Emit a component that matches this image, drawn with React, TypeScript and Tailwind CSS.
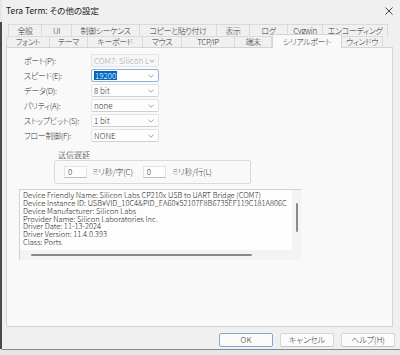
import React from 'react';

const ui = "font-['Noto_Sans_CJK_JP',sans-serif] [font-feature-settings:'palt'] font-light";

const row1 = [
  { label: '全般', w: 34 },
  { label: 'UI', w: 30 },
  { label: '制御シーケンス', w: 68 },
  { label: 'コピーと貼り付け', w: 77 },
  { label: '表示', w: 33 },
  { label: 'ログ', w: 38 },
  { label: 'Cygwin', w: 35 },
  { label: 'エンコーディング', w: 65 },
];

const row2 = [
  { label: 'フォント', w: 44 },
  { label: 'テーマ', w: 38 },
  { label: 'キーボード', w: 55 },
  { label: 'マウス', w: 39 },
  { label: 'TCP/IP', w: 53 },
  { label: '端末', w: 37 },
  { label: 'シリアルポート', w: 70, active: true },
  { label: 'ウィンドウ', w: 41 },
];

const fields = [
  { label: 'ポート(P):', value: 'COM7: Silicon L', disabled: true },
  { label: 'スピード(E):', value: '19200', focused: true },
  { label: 'データ(D):', value: '8 bit' },
  { label: 'パリティ(A):', value: 'none' },
  { label: 'ストップビット(S):', value: '1 bit' },
  { label: 'フロー制御(F):', value: 'NONE' },
];

const info = [
  'Device Friendly Name: Silicon Labs CP210x USB to UART Bridge (COM7)',
  'Device Instance ID: USB¥VID_10C4&PID_EA60¥52107F8B6735EF119C181A806C',
  'Device Manufacturer: Silicon Labs',
  'Provider Name: Silicon Laboratories Inc.',
  'Driver Date: 11-13-2024',
  'Driver Version: 11.4.0.393',
  'Class: Ports',
];

function Chevron() {
  return (
    <svg width="6" height="4" viewBox="0 0 6 4" className="shrink-0">
      <polyline points="0.5,0.8 3,3.2 5.5,0.8" fill="none" stroke="#8a8a8a" strokeWidth="0.8" />
    </svg>
  );
}

function Combo({ value, disabled, focused }: { value: string; disabled?: boolean; focused?: boolean }) {
  return (
    <div
      className={
        focused
          ? 'w-[68px] h-[13px] flex items-center justify-between pl-[2px] pr-[4px] bg-[#fdfdfd] border border-[#8fb3d9] rounded-[2px]'
          : disabled
          ? 'w-[68px] h-[13px] flex items-center justify-between pl-[2px] pr-[4px] bg-[#f7f7f7] border border-[#e3e3e3] rounded-[2px]'
          : 'w-[68px] h-[13px] flex items-center justify-between pl-[2px] pr-[4px] bg-[#fdfdfd] border border-[#e2e2e2] border-b-[#cfcfcf] rounded-[2px]'
      }
    >
      {focused ? (
        <span className="bg-[#0067c0] text-white px-[1px] leading-[9px] text-[8px]">{value}</span>
      ) : (
        <span className={disabled ? 'text-[#a8a8a8] text-[8px] leading-[10px] whitespace-nowrap' : 'text-[#333] text-[8px] leading-[10px]'}>
          {value}
        </span>
      )}
      <Chevron />
    </div>
  );
}

function Button({ label, primary }: { label: string; primary?: boolean }) {
  return (
    <div
      className={
        primary
          ? 'w-[54px] h-[14px] flex items-center justify-center bg-[#fbfbfb] border border-[#7fa9d4] rounded-[2px] text-[8px] text-[#333]'
          : 'w-[54px] h-[14px] flex items-center justify-center bg-[#fbfbfb] border border-[#d6d6d6] border-b-[#c4c4c4] rounded-[2px] text-[8px] text-[#333]'
      }
    >
      {label}
    </div>
  );
}

export default function App() {
  return (
    <div className={`w-[400px] h-[355px] overflow-hidden bg-[#e6e6e6] flex ${ui}`}>
      <div className="w-[2px] h-[327px] mt-[22px] bg-[#4a4a4a] shrink-0" />
      <div className="w-[410px] h-[350px] shrink-0 bg-[#f0f0f0] border-b border-[#8a8a8a] flex flex-col">
        {/* title bar */}
        <div className="h-[24px] flex items-start justify-between">
          <span className="ml-[4px] mt-[4px] text-[8.5px] leading-[12px] text-[#1a1a1a] font-normal">Tera Term: その他の設定</span>
          <svg width="8" height="8" viewBox="0 0 8 8" className="mr-[19px] mt-[7px]">
            <path d="M0.5 0.5 L7.5 7.5 M7.5 0.5 L0.5 7.5" stroke="#333" strokeWidth="0.9" />
          </svg>
        </div>

        {/* tabs */}
        <div className="flex ml-[6px] h-[12px]">
          {row1.map((t) => (
            <div
              key={t.label}
              style={{ width: t.w }}
              className="h-[12px] border-t border-r border-[#dadada] first:border-l flex items-center justify-center text-[8px] leading-[10px] tracking-[-0.4px] text-[#333] whitespace-nowrap"
            >
              {t.label}
            </div>
          ))}
        </div>
        <div className="flex ml-[4px] h-[11px] items-end relative z-10">
          {row2.map((t) =>
            t.active ? (
              <div
                key={t.label}
                style={{ width: t.w }}
                className="h-[14px] -mb-px bg-[#f9f9f9] border-t border-l border-r border-[#d4d4d4] flex items-center justify-center text-[8px] leading-[10px] tracking-[-0.4px] text-[#333] whitespace-nowrap"
              >
                {t.label}
              </div>
            ) : (
              <div
                key={t.label}
                style={{ width: t.w }}
                className="h-[11px] border-t border-r border-[#dadada] first:border-l flex items-center justify-center text-[8px] leading-[10px] tracking-[-0.4px] text-[#333] whitespace-nowrap"
              >
                {t.label}
              </div>
            )
          )}
        </div>

        {/* panel */}
        <div className="ml-[4px] w-[387px] h-[280px] bg-[#f9f9f9] border border-[#d4d4d4] pt-[6px] pl-[17px]">
          <div className="flex flex-col gap-[2px]">
            {fields.map((f) => (
              <div key={f.label} className="flex items-center h-[13px]">
                <span className="w-[67px] text-[8px] leading-[10px] tracking-[-0.3px] text-[#333] whitespace-nowrap">{f.label}</span>
                <Combo value={f.value} disabled={f.disabled} focused={f.focused} />
              </div>
            ))}
          </div>

          {/* send delay */}
          <div className="ml-[30px] mt-[8px] w-[197px]">
            <div className="ml-[4px] text-[8px] leading-[10px] text-[#333]">送信遅延</div>
            <div className="h-[24px] border border-[#d9d9d9] rounded-[2px] flex items-center pl-[9px]">
              <div className="w-[23px] h-[12px] bg-[#fdfdfd] border border-[#e2e2e2] border-b-[#bdbdbd] flex items-center pl-[3px] text-[8px] text-[#333]">
                0
              </div>
              <span className="ml-[5px] text-[8px] tracking-[-0.2px] text-[#333]">ミリ秒/字(C)</span>
              <div className="ml-[10px] w-[23px] h-[12px] bg-[#fdfdfd] border border-[#e2e2e2] border-b-[#bdbdbd] flex items-center pl-[3px] text-[8px] text-[#333]">
                0
              </div>
              <span className="ml-[6px] text-[8px] tracking-[-0.2px] text-[#333]">ミリ秒/行(L)</span>
            </div>
          </div>

          {/* device info */}
          <div className="mt-[5px] -ml-[5px] w-[282px] h-[71px] border-l border-t border-[#d2d2d2] bg-[#fbfbfb] flex flex-col">
            <div className="flex flex-1 min-h-0">
              <div className="flex-1 overflow-hidden pl-[3px] pt-[1px] bg-[#fdfdfd]">
                {info.map((l) => (
                  <div key={l} className="text-[7.5px] leading-[7.85px] text-[#222] whitespace-nowrap [font-feature-settings:normal]">
                    {l}
                  </div>
                ))}
              </div>
              <div className="w-[9px] bg-[#f3f3f3] flex justify-center pt-[13px]">
                <div className="w-[2px] h-[29px] bg-[#8a8a8a] rounded-full" />
              </div>
            </div>
            <div className="h-[10px] bg-[#f3f3f3] flex items-center pl-[11px]">
              <div className="w-[221px] h-[2px] bg-[#8a8a8a] rounded-full" />
            </div>
          </div>
        </div>

        {/* buttons */}
        <div className="flex gap-[7px] ml-[217px] mt-[6px]">
          <Button label="OK" primary />
          <Button label="キャンセル" />
          <Button label="ヘルプ(H)" />
        </div>
      </div>
    </div>
  );
}
